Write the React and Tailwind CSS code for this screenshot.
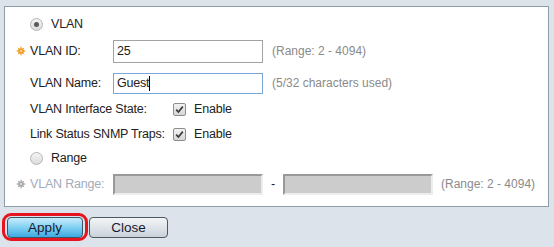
const Star = ({ color }) => (
    <svg width="10" height="10" viewBox="0 0 10 10">
        <g fill={color}>
            <polygon points="5,0 6.2,3 5,2.6 3.8,3" />
            <polygon points="5,10 6.2,7 5,7.4 3.8,7" />
            <polygon points="0,5 3,3.8 2.6,5 3,6.2" />
            <polygon points="10,5 7,3.8 7.4,5 7,6.2" />
            <polygon points="1.5,1.5 4,2.8 2.8,4" />
            <polygon points="8.5,1.5 7.2,4 6,2.8" />
            <polygon points="1.5,8.5 2.8,6 4,7.2" />
            <polygon points="8.5,8.5 6,7.2 7.2,6" />
            <circle cx="5" cy="5" r="2.6" />
        </g>
        <circle cx="5" cy="5" r="1.1" fill="#fff" opacity="0.7" />
    </svg>
)

const Radio = ({ checked }) => (
    <span className="w-[13px] h-[13px] rounded-full border border-[#b5b5b5] bg-gradient-to-b from-[#f4f4f4] to-[#dcdcdc] flex items-center justify-center">
        {checked && <span className="w-[5px] h-[5px] rounded-full bg-[#5a5a5a]" />}
    </span>
)

const Check = () => (
    <span className="w-[13px] h-[13px] rounded-[2px] border border-[#8e8e8e] bg-gradient-to-b from-[#f2f2f2] to-[#d6d6d6] flex items-center justify-center">
        <svg width="9" height="9" viewBox="0 0 9 9">
            <path d="M1.2 4.6 L3.4 7 L7.8 1.6" fill="none" stroke="#3a3a3a" strokeWidth="1.7" />
        </svg>
    </span>
)

const Slot = ({ children }) => (
    <span className="w-[14px] flex items-center">{children}</span>
)

const Hint = ({ children, ml = "ml-[9px]" }) => (
    <span className={`${ml} text-[12px] tracking-normal text-[#8a8a8a] whitespace-nowrap`}>{children}</span>
)

const App = () => {
    return (
        <div className="w-[554px] h-[247px] bg-[#dce3ea] pt-[6px] pl-[4px] text-[12.5px] tracking-[-0.2px] text-[#222] whitespace-nowrap font-['Liberation_Sans',Arial,sans-serif]">
            <div className="w-[545px] h-[201px] bg-white border border-[#8d9ea8] pl-[11px] pt-[5px]">
                <div className="flex items-center h-[24px]">
                    <Slot />
                    <Radio checked />
                    <span className="ml-[8px]">VLAN</span>
                </div>
                <div className="flex items-center h-[26px] mt-[2px]">
                    <Slot><Star color="#f29a1e" /></Slot>
                    <span className="w-[83px]">VLAN ID:</span>
                    <div className="w-[150px] h-[23px] border border-[#a3a3a3] flex items-center pl-[3px]">25</div>
                    <Hint>(Range: 2 - 4094)</Hint>
                </div>
                <div className="flex items-center h-[24px] mt-[7px]">
                    <Slot />
                    <span className="w-[83px]">VLAN Name:</span>
                    <div className="w-[150px] h-[21px] border border-[#7aa6de] flex items-center pl-[3px]">
                        Guest<span className="w-px h-[15px] bg-black" />
                    </div>
                    <Hint>(5/32 characters used)</Hint>
                </div>
                <div className="flex items-center h-[24px] mt-[2px]">
                    <Slot />
                    <span className="w-[143px]">VLAN Interface State:</span>
                    <Check />
                    <span className="ml-[8px]">Enable</span>
                </div>
                <div className="flex items-center h-[24px] mt-[1px]">
                    <Slot />
                    <span className="w-[143px]">Link Status SNMP Traps:</span>
                    <Check />
                    <span className="ml-[8px]">Enable</span>
                </div>
                <div className="flex items-center h-[24px]">
                    <Slot />
                    <Radio />
                    <span className="ml-[8px]">Range</span>
                </div>
                <div className="flex items-center h-[22px] mt-[3px]">
                    <Slot><Star color="#a8a8a8" /></Slot>
                    <span className="w-[83px] text-[#a3acba]">VLAN Range:</span>
                    <div className="w-[150px] h-[21px] bg-[#cccccc] border-2 border-t-[#999] border-l-[#999] border-b-[#ededed] border-r-[#ededed]" />
                    <span className="w-[20px] text-center">-</span>
                    <div className="w-[150px] h-[21px] bg-[#cccccc] border-2 border-t-[#999] border-l-[#999] border-b-[#ededed] border-r-[#ededed]" />
                    <Hint ml="ml-[8px]">(Range: 2 - 4094)</Hint>
                </div>
            </div>
            <div className="flex items-center mt-[6px] -ml-[2px] tracking-normal">
                <div className="w-[86px] h-[28px] rounded-[9px] border-[3px] border-[#e5141e] flex items-center justify-center">
                    <button className="w-[76px] h-[21px] rounded-[4px] border border-[#3c5466] bg-gradient-to-b from-[#c9ecfb] via-[#7fd0f2] to-[#3aa9de] text-[13.5px] text-[#1a1a2e]">
                        Apply
                    </button>
                </div>
                <button className="ml-[1px] w-[79px] h-[21px] rounded-[4px] border border-[#4e5860] bg-gradient-to-b from-[#f3f6f8] to-[#c9d2da] text-[13.5px] text-[#1a1a2e]">
                    Close
                </button>
            </div>
        </div>
    )
}

export default App
